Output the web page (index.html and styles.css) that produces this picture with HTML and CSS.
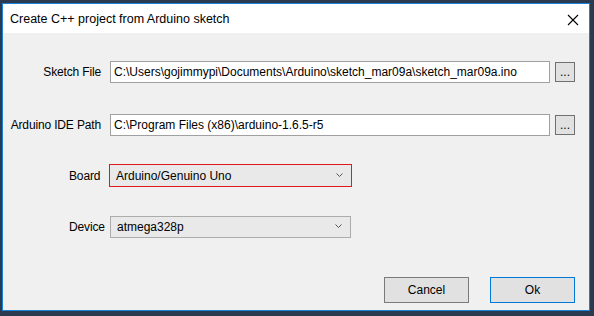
FILE: index.html
```html
<!DOCTYPE html>
<html lang="en">
<head>
    <meta charset="UTF-8">
    <meta name="viewport" content="width=device-width, initial-scale=1.0">
    <title>Create C++ project from Arduino sketch</title>
    <link rel="stylesheet" href="styles.css">
</head>
<body>

    <div class="window">
        <!-- Title bar -->
        <div class="titlebar">
            <span class="title">Create C++ project from Arduino sketch</span>
            <svg class="close" width="12" height="12" viewBox="0 0 12 12">
                <path d="M1 1 L11 11 M11 1 L1 11" stroke="#000" stroke-width="1.1" fill="none"/>
            </svg>
        </div>

        <!-- Form -->
        <div class="content">
            <div class="row row-sketch">
                <label class="label">Sketch File</label>
                <div class="textbox">C:\Users\gojimmypi\Documents\Arduino\sketch_mar09a\sketch_mar09a.ino</div>
                <button class="browse">...</button>
            </div>

            <div class="row row-ide">
                <label class="label">Arduino IDE Path</label>
                <div class="textbox">C:\Program Files (x86)\arduino-1.6.5-r5</div>
                <button class="browse">...</button>
            </div>

            <div class="row row-board">
                <label class="label label-left">Board</label>
                <div class="combo combo-focus">
                    <span>Arduino/Genuino Uno</span>
                    <svg class="chevron" width="7" height="4" viewBox="0 0 7 4">
                        <path d="M0.5 0.5 L3.5 3.5 L6.5 0.5" stroke="#555" stroke-width="1" fill="none"/>
                    </svg>
                </div>
            </div>

            <div class="row row-device">
                <label class="label label-left">Device</label>
                <div class="combo">
                    <span>atmega328p</span>
                    <svg class="chevron" width="7" height="4" viewBox="0 0 7 4">
                        <path d="M0.5 0.5 L3.5 3.5 L6.5 0.5" stroke="#555" stroke-width="1" fill="none"/>
                    </svg>
                </div>
            </div>

            <div class="actions">
                <button class="btn">Cancel</button>
                <button class="btn btn-default">Ok</button>
            </div>
        </div>
    </div>

</body>
</html>
```

FILE: styles.css
```css
body {
    background-color: #2b3a4f;
    font-family: 'Segoe UI', 'Liberation Sans', Arial, sans-serif;
    font-size: 12px;
    color: #000;
    margin: 0;
    padding: 3px 0 0 2px;
    width: 594px;
    height: 316px;
    box-sizing: border-box;
    overflow: hidden;
}

.window {
    width: 588px;
    height: 308px;
    box-sizing: border-box;
    border: 1px solid #1883d7;
    background-color: #f0f0f0;
    display: flex;
    flex-direction: column;
}

.titlebar {
    height: 29px;
    background-color: #fff;
    display: flex;
    align-items: center;
    justify-content: space-between;
    padding: 0 10px 0 7px;
    flex-shrink: 0;
}

.title {
    padding-top: 1px;
    font-size: 12.5px;
}

.close {
    margin-top: 2px;
}

.content {
    display: flex;
    flex-direction: column;
    padding-left: 7px;
}

.row {
    display: flex;
    align-items: center;
}

.row-sketch {
    margin-top: 28px;
}

.row-ide {
    margin-top: 31px;
}

.row-board {
    margin-top: 28px;
}

.row-device {
    margin-top: 29px;
}

.label {
    width: 91px;
    text-align: right;
    white-space: nowrap;
    letter-spacing: -0.15px;
    flex-shrink: 0;
}

.label-left {
    text-align: left;
    padding-left: 59px;
    box-sizing: border-box;
}

.textbox {
    width: 440px;
    height: 22px;
    box-sizing: border-box;
    margin-left: 9px;
    border: 1px solid #a0a0a0;
    background-color: #fff;
    padding: 0 3px;
    line-height: 20px;
    white-space: nowrap;
    overflow: hidden;
}

.browse {
    width: 20px;
    height: 20px;
    margin-left: 5px;
    padding: 0;
    border: 1px solid #707070;
    background-color: #e1e1e1;
    font-family: inherit;
    font-size: 12px;
    line-height: 14px;
}

.combo {
    width: 241px;
    height: 22px;
    box-sizing: border-box;
    margin-left: 9px;
    border: 1px solid #acacac;
    background-color: #e9e9e9;
    display: flex;
    align-items: center;
    justify-content: space-between;
    padding: 0 8px 0 6px;
}

.combo-focus {
    width: 243px;
    height: 23px;
    margin-left: 8px;
    border-color: #e0191f;
}

.chevron {
    margin-top: -2px;
}

.actions {
    display: flex;
    justify-content: flex-end;
    gap: 21px;
    margin-top: 39px;
    padding-right: 14px;
}

.btn {
    width: 85px;
    height: 26px;
    border: 1px solid #7a7a7a;
    background-color: #e1e1e1;
    font-family: inherit;
    font-size: 12px;
    padding: 0;
}

.btn-default {
    border-color: #0078d7;
}
```
